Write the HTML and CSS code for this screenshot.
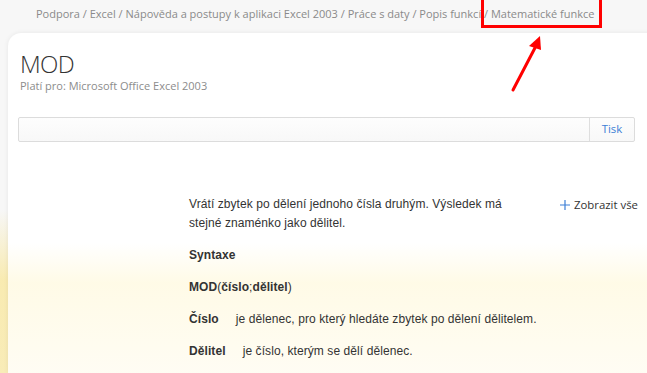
FILE: index.html
```html
<!DOCTYPE html>
<html lang="cs">
<head>
    <meta charset="UTF-8">
    <title>MOD - Excel</title>
    <link rel="stylesheet" href="styles.css">
</head>
<body>
    <nav class="crumbs">
        <a href="#">Podpora</a> / <a href="#">Excel</a> / <a href="#">Nápověda a postupy k aplikaci Excel 2003</a> / <a href="#">Práce s daty</a> / <a href="#">Popis funkcí</a> / <a href="#">Matematické funkce</a>
    </nav>

    <div class="mark-box"></div>
    <svg class="mark-arrow" width="40" height="62" viewBox="0 0 40 62">
        <path d="M6 58 L30 12" stroke="#ff0000" stroke-width="3" stroke-linecap="round" fill="none"/>
        <path d="M22 14 L33 4 L34 18 Z" fill="#ff0000"/>
    </svg>

    <main class="panel">
        <header class="panel-head">
            <h1>MOD</h1>
            <p class="applies">Platí pro: Microsoft Office Excel 2003</p>
        </header>

        <div class="toolbar">
            <div class="toolbar-fill"></div>
            <a href="#" class="print">Tisk</a>
        </div>

        <div class="article">
            <div class="article-body">
                <p class="intro">Vrátí zbytek po dělení jednoho čísla druhým. Výsledek má stejné znaménko jako dělitel.</p>
                <p><b>Syntaxe</b></p>
                <p><b>MOD</b>(<b>číslo</b>;<b>dělitel</b>)</p>
                <p><b>Číslo</b>&nbsp;&nbsp;&nbsp;&nbsp; je dělenec, pro který hledáte zbytek po dělení dělitelem.</p>
                <p><b>Dělitel</b>&nbsp;&nbsp;&nbsp;&nbsp; je číslo, kterým se dělí dělenec.</p>
            </div>
            <a href="#" class="expand">
                <svg class="plus" width="10" height="10" viewBox="0 0 10 10">
                    <path d="M5 0 V10 M0 5 H10" stroke="#3d7fd6" stroke-width="1.2" fill="none"/>
                </svg>
                Zobrazit vše
            </a>
        </div>
    </main>
</body>
</html>
```

FILE: styles.css
```css
* {
    margin: 0;
    padding: 0;
    box-sizing: border-box;
}

body {
    width: 647px;
    height: 373px;
    overflow: hidden;
    position: relative;
    font-family: "Open Sans", "DejaVu Sans", sans-serif;
    background:
        linear-gradient(to bottom, rgba(255, 255, 255, 0) 210px, rgba(250, 225, 120, 0.55) 280px, rgba(250, 225, 120, 0.5) 373px),
        #f7f7f7;
}

a {
    text-decoration: none;
    color: inherit;
}

.crumbs {
    padding: 5px 0 0 36px;
    height: 33px;
    font-size: 11px;
    line-height: 17px;
    color: #8a8a8a;
    white-space: nowrap;
}

.mark-box {
    position: absolute;
    left: 481px;
    top: 0;
    width: 121px;
    height: 28px;
    border: 3px solid #ff0000;
    border-top: none;
}

.mark-arrow {
    position: absolute;
    left: 507px;
    top: 32px;
}

.panel {
    margin-left: 8px;
    margin-right: -20px;
    height: 340px;
    border-radius: 13px 0 0 0;
    box-shadow: 0 0 5px rgba(0, 0, 0, 0.07);
    background:
        linear-gradient(to bottom, rgba(255, 255, 255, 0) 210px, rgba(255, 250, 228, 0.9) 250px, rgba(255, 251, 236, 0.6) 340px),
        linear-gradient(to right, rgba(255, 255, 255, 0) 0, #fff 560px),
        #fff;
    padding: 17px 0 0 12px;
}

.panel-head h1 {
    font-family: "Open Sans", sans-serif;
    font-weight: 300;
    font-size: 24px;
    line-height: 28px;
    color: #333;
    letter-spacing: -0.6px;
}

.applies {
    font-size: 11px;
    line-height: 16px;
    color: #8c8c8c;
}

.toolbar {
    display: flex;
    width: 617px;
    height: 25px;
    margin: 23px 0 0 -2px;
    border: 1px solid #dcdcdc;
    border-radius: 2px;
    background: linear-gradient(#fdfdfd, #f8f8f8);
}

.toolbar-fill {
    flex: 1;
    border-right: 1px solid #dedede;
}

.print {
    width: 44px;
    text-align: center;
    font-size: 11.4px;
    line-height: 22px;
    color: #3d7fd6;
}

.article {
    display: flex;
    align-items: flex-start;
    padding: 53px 0 0 169px;
}

.article-body {
    width: 360px;
    font-family: "Liberation Sans", Arial, sans-serif;
    font-size: 12px;
    line-height: 19px;
    color: #333;
    letter-spacing: 0.08px;
}

.article-body p {
    margin-bottom: 13px;
    white-space: nowrap;
}

.article-body .intro {
    width: 320px;
    white-space: normal;
}

.expand {
    display: flex;
    align-items: center;
    gap: 4px;
    margin-left: auto;
    margin-right: 29px;
    font-size: 11.4px;
    line-height: 19px;
    color: #333;
    white-space: nowrap;
}
```
